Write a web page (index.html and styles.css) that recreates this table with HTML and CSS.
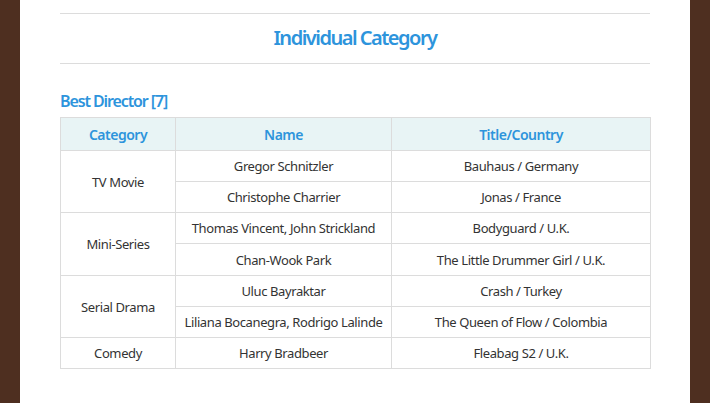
FILE: index.html
```html
<!DOCTYPE html>
<html>
<head>
<meta charset="utf-8">
<link rel="stylesheet" href="styles.css">
</head>
<body>
<div class="frame">
  <div class="content">
    <h2 class="title">Individual Category</h2>
    <h3 class="sub">Best Director [7]</h3>
    <table class="awards">
      <colgroup><col class="c1"><col class="c2"><col class="c3"></colgroup>
      <thead>
        <tr><th>Category</th><th>Name</th><th>Title/Country</th></tr>
      </thead>
      <tbody>
        <tr><td rowspan="2">TV Movie</td><td>Gregor Schnitzler</td><td>Bauhaus / Germany</td></tr>
        <tr><td>Christophe Charrier</td><td>Jonas / France</td></tr>
        <tr><td rowspan="2">Mini-Series</td><td>Thomas Vincent, John Strickland</td><td>Bodyguard / U.K.</td></tr>
        <tr class="tall"><td>Chan-Wook Park</td><td>The Little Drummer Girl / U.K.</td></tr>
        <tr><td rowspan="2">Serial Drama</td><td>Uluc Bayraktar</td><td>Crash / Turkey</td></tr>
        <tr><td>Liliana Bocanegra, Rodrigo Lalinde</td><td>The Queen of Flow / Colombia</td></tr>
        <tr><td>Comedy</td><td>Harry Bradbeer</td><td>Fleabag S2 / U.K.</td></tr>
      </tbody>
    </table>
  </div>
</div>
</body>
</html>
```
FILE: styles.css
```css
html, body { margin: 0; padding: 0; }
body { font-family: "Noto Sans", "Liberation Sans", sans-serif; background: #fff; }
.frame {
  width: 710px; height: 403px; box-sizing: border-box;
  background: #fff;
  border-left: 20px solid #4e2f20;
  border-right: 20px solid #4e2f20;
  padding: 13px 40px 0;
  overflow: hidden;
}
.content { width: 590px; }
.title {
  margin: 0; height: 51px; box-sizing: border-box;
  border-top: 1px solid #dcdcdc; border-bottom: 1px solid #dcdcdc;
  display: flex; align-items: center; justify-content: center;
  color: #2d94dc; font-size: 20px; font-weight: 600; letter-spacing: -1.5px;
  padding-bottom: 2px;
}
.sub {
  margin: 27px 0 0; height: 26px; line-height: 20px;
  color: #2d94dc; font-size: 16px; font-weight: 600; letter-spacing: -1.1px;
}
.awards {
  width: 591px; border-collapse: collapse; table-layout: fixed;
}
.c1 { width: 115px; }
.c2 { width: 216px; }
.c3 { width: 259px; }
.awards th, .awards td {
  border: 1px solid #dcdcdc; text-align: center; padding: 0;
}
.awards th {
  height: 32px; background: #e8f4f5; color: #2d94dc;
  font-size: 14px; font-weight: 600; letter-spacing: -0.5px;
}
.awards td {
  height: 30px; color: #333; font-size: 13px; letter-spacing: -0.4px;
}
.awards tr.tall td { height: 31px; }
```
